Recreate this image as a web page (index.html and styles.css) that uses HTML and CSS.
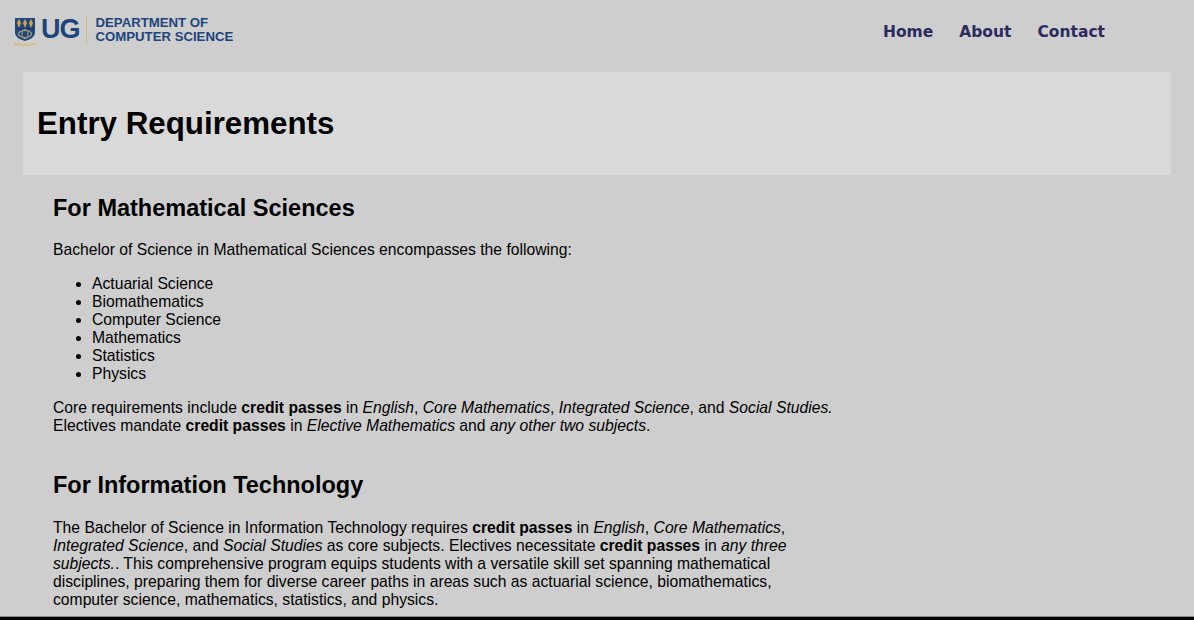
FILE: index.html
```html
<!DOCTYPE html>
<html lang="en">
<head>
    <meta charset="UTF-8">
    <meta name="viewport" content="width=device-width, initial-scale=1.0">
    <title>Entry Requirements</title>
    <link rel="stylesheet" href="styles.css">
</head>
<body>
    <header class="navbar">
        <a class="logo" href="#">
            <svg class="crest" width="24" height="29" viewBox="0 0 24 29">
                <path d="M2 0H22V15Q22 20 12 23Q2 20 2 15Z" fill="#24467a"/>
                <path d="M6 1L8 5L6 10L4 5ZM12 1L14 5L12 10L10 5ZM18 1L20 5L18 10L16 5Z" fill="#c9a84f"/>
                <path d="M3 10.500H21" stroke="#16335f" stroke-width="1"/>
                <ellipse cx="12" cy="16" rx="6.500" ry="3.500" fill="none" stroke="#a3a07c" stroke-width="1.200"/>
                <ellipse cx="12" cy="16" rx="3" ry="4.500" fill="none" stroke="#a3a07c" stroke-width="1"/>
                <path d="M0 24Q12 28 24 24L23 26.500Q12 29.500 1 26.500Z" fill="#d4bf8a"/>
            </svg>
            <span class="logo-ug">UG</span>
            <span class="logo-dept">DEPARTMENT OF<br>COMPUTER SCIENCE</span>
        </a>
        <nav class="nav-links">
            <a href="#">Home</a>
            <a href="#">About</a>
            <a href="#">Contact</a>
        </nav>
    </header>

    <section class="hero">
        <h1>Entry Requirements</h1>
    </section>

    <main class="content">
        <section class="programme">
            <h2>For Mathematical Sciences</h2>
            <p>Bachelor of Science in Mathematical Sciences encompasses the following:</p>
            <ul>
                <li>Actuarial Science</li>
                <li>Biomathematics</li>
                <li>Computer Science</li>
                <li>Mathematics</li>
                <li>Statistics</li>
                <li>Physics</li>
            </ul>
            <p>Core requirements include <b>credit passes</b> in <i>English</i>, <i>Core Mathematics</i>, <i>Integrated Science</i>, and <i>Social Studies.</i><br>
            Electives mandate <b>credit passes</b> in <i>Elective Mathematics</i> and <i>any other two subjects</i>.</p>
        </section>
        <section class="programme">
            <h2>For Information Technology</h2>
            <p>The Bachelor of Science in Information Technology requires <b>credit passes</b> in <i>English</i>, <i>Core Mathematics</i>, <i>Integrated Science</i>, and <i>Social Studies</i> as core subjects. Electives necessitate <b>credit passes</b> in <i>any three subjects.</i>. This comprehensive program equips students with a versatile skill set spanning mathematical disciplines, preparing them for diverse career paths in areas such as actuarial science, biomathematics, computer science, mathematics, statistics, and physics.</p>
        </section>
    </main>
    <div class="page-edge"></div>
</body>
</html>
```

FILE: styles.css
```css
body {
    display: flex;
    flex-direction: column;
    height: 620px;
    margin: 0;
    overflow: hidden;
    background: #cecece;
    color: black;
    font-family: "Liberation Sans", Arial, sans-serif;
    font-size: 15.700px;
    line-height: 18px;
}

.navbar {
    display: flex;
    flex: none;
    justify-content: space-between;
    align-items: center;
    height: 62px;
    padding: 0 89px 0 13px;
}

.logo {
    display: flex;
    align-items: center;
    margin-top: -2px;
    color: #1c457c;
    text-decoration: none;
}

.crest {
    margin-top: 4px;
    margin-right: 4px;
    filter: blur(0.4px);
}

.logo-ug {
    padding: 0 6px 2px 0;
    border-right: 1px solid #d2b980;
    font-size: 27px;
    font-weight: bold;
    letter-spacing: -1px;
    line-height: 26px;
}

.logo-dept {
    margin-left: 9px;
    font-size: 13.200px;
    font-weight: bold;
    line-height: 14px;
}

.nav-links {
    display: flex;
    gap: 26px;
    margin-top: 1px;
}

.nav-links a {
    color: #2c2a5e;
    font-family: "DejaVu Sans", Verdana, sans-serif;
    font-size: 15.500px;
    font-weight: bold;
    text-decoration: none;
}

.hero {
    flex: none;
    display: flex;
    align-items: center;
    height: 103px;
    margin: 10px 23px 0;
    padding: 0 14px;
    background: #d9d9d9;
}

h1 {
    margin: 0;
    font-size: 31.300px;
    line-height: 37px;
}

.content {
    flex: 1;
    min-height: 0;
    padding: 20px 53px 0;
}

.programme {
    max-width: 785px;
    margin-bottom: 37px;
}

.programme:last-child {
    margin-bottom: 0;
}

h2 {
    margin: 0 0 19px;
    font-size: 23.500px;
    line-height: 27px;
}

.programme + .programme h2 {
    margin-bottom: 20px;
}

p {
    margin: 16px 0;
}

ul {
    margin: 16px 0;
    padding-left: 39px;
}

.page-edge {
    flex: none;
    height: 3px;
    background: black;
    border-top: 1px solid #8c8c8c;
}
```
